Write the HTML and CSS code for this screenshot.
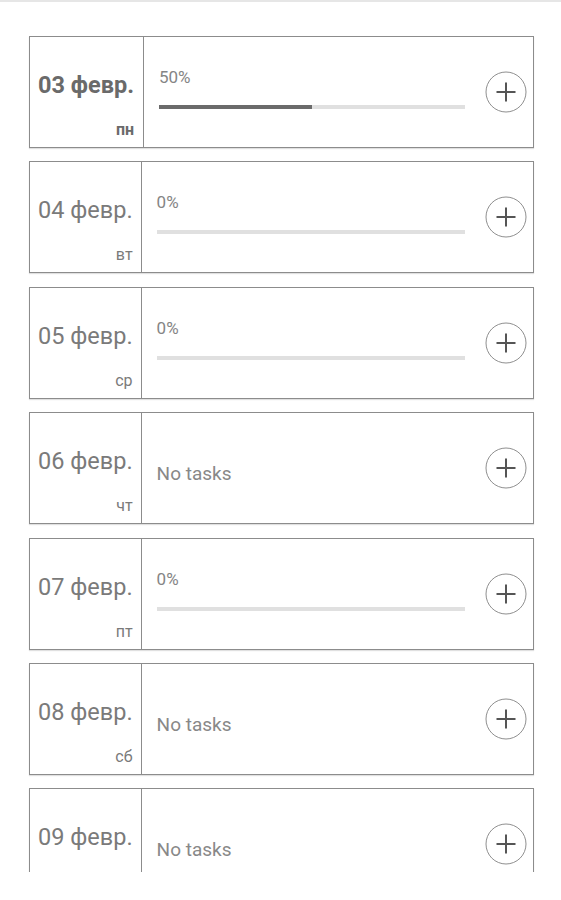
FILE: index.html
```html
<!DOCTYPE html>
<html lang="ru">
<head>
<meta charset="utf-8">
<title>Tasks</title>
<link rel="stylesheet" href="styles.css">
</head>
<body>
<div class="topbar"></div>
<div class="list">
  <div class="card today">
    <div class="date"><div class="num">03 февр.</div><div class="wd">пн</div></div>
    <div class="body">
      <div class="progress"><div class="pct">50%</div><div class="bar"><div class="fill" style="width:50%"></div></div></div>
      <button class="add"><svg viewBox="0 0 42 42" width="42" height="42"><circle cx="21" cy="21" r="20" fill="none" stroke="#8f8f8f" stroke-width="1"/><path d="M11.5 21h19M21 11.5v19" stroke="#555" stroke-width="2" fill="none"/></svg></button>
    </div>
  </div>
  <div class="card">
    <div class="date"><div class="num">04 февр.</div><div class="wd">вт</div></div>
    <div class="body">
      <div class="progress"><div class="pct">0%</div><div class="bar"><div class="fill" style="width:0%"></div></div></div>
      <button class="add"><svg viewBox="0 0 42 42" width="42" height="42"><circle cx="21" cy="21" r="20" fill="none" stroke="#8f8f8f" stroke-width="1"/><path d="M11.5 21h19M21 11.5v19" stroke="#555" stroke-width="2" fill="none"/></svg></button>
    </div>
  </div>
  <div class="card">
    <div class="date"><div class="num">05 февр.</div><div class="wd">ср</div></div>
    <div class="body">
      <div class="progress"><div class="pct">0%</div><div class="bar"><div class="fill" style="width:0%"></div></div></div>
      <button class="add"><svg viewBox="0 0 42 42" width="42" height="42"><circle cx="21" cy="21" r="20" fill="none" stroke="#8f8f8f" stroke-width="1"/><path d="M11.5 21h19M21 11.5v19" stroke="#555" stroke-width="2" fill="none"/></svg></button>
    </div>
  </div>
  <div class="card">
    <div class="date"><div class="num">06 февр.</div><div class="wd">чт</div></div>
    <div class="body">
      <div class="empty">No tasks</div>
      <button class="add"><svg viewBox="0 0 42 42" width="42" height="42"><circle cx="21" cy="21" r="20" fill="none" stroke="#8f8f8f" stroke-width="1"/><path d="M11.5 21h19M21 11.5v19" stroke="#555" stroke-width="2" fill="none"/></svg></button>
    </div>
  </div>
  <div class="card">
    <div class="date"><div class="num">07 февр.</div><div class="wd">пт</div></div>
    <div class="body">
      <div class="progress"><div class="pct">0%</div><div class="bar"><div class="fill" style="width:0%"></div></div></div>
      <button class="add"><svg viewBox="0 0 42 42" width="42" height="42"><circle cx="21" cy="21" r="20" fill="none" stroke="#8f8f8f" stroke-width="1"/><path d="M11.5 21h19M21 11.5v19" stroke="#555" stroke-width="2" fill="none"/></svg></button>
    </div>
  </div>
  <div class="card">
    <div class="date"><div class="num">08 февр.</div><div class="wd">сб</div></div>
    <div class="body">
      <div class="empty">No tasks</div>
      <button class="add"><svg viewBox="0 0 42 42" width="42" height="42"><circle cx="21" cy="21" r="20" fill="none" stroke="#8f8f8f" stroke-width="1"/><path d="M11.5 21h19M21 11.5v19" stroke="#555" stroke-width="2" fill="none"/></svg></button>
    </div>
  </div>
  <div class="card">
    <div class="date"><div class="num">09 февр.</div></div>
    <div class="body">
      <div class="empty">No tasks</div>
      <button class="add"><svg viewBox="0 0 42 42" width="42" height="42"><circle cx="21" cy="21" r="20" fill="none" stroke="#8f8f8f" stroke-width="1"/><path d="M11.5 21h19M21 11.5v19" stroke="#555" stroke-width="2" fill="none"/></svg></button>
    </div>
  </div>
</div>
</body>
</html>
```
FILE: styles.css
```css
html, body {
  margin: 0;
  padding: 0;
  background: #fff;
  font-family: Roboto, "Noto Sans", sans-serif;
  color: #777;
}
.topbar {
  height: 2px;
  background: #e6e6e6;
}
.list {
  height: 870px;
  overflow: hidden;
  padding: 34px 0 0 29px;
  box-sizing: border-box;
  display: flex;
  flex-direction: column;
  gap: 13.4px;
}
.card {
  flex: none;
  width: 505px;
  height: 112px;
  box-sizing: border-box;
  border: 1px solid #8c8c8c;
  box-shadow: 0 1px 1px rgba(0,0,0,0.12);
  display: flex;
}
.date {
  flex: none;
  display: flex;
  flex-direction: column;
  align-items: flex-end;
  padding: 36px 8px 9px 8px;
  border-right: 1px solid #8c8c8c;
}
.num {
  font-size: 23.5px;
  line-height: 24px;
  color: #7a7a7a;
}
.wd {
  margin-top: auto;
  font-size: 16px;
  line-height: 16px;
  color: #7a7a7a;
}
.today .num, .today .wd {
  font-weight: 700;
  color: #6a6a6a;
}
.today .date {
  padding-right: 9px;
}
.body {
  flex: 1;
  display: flex;
  align-items: center;
  padding: 0 6px 0 15px;
}
.progress {
  flex: 1;
  align-self: flex-start;
  padding-top: 32px;
  margin-right: 20px;
}
.pct {
  font-size: 17px;
  line-height: 17px;
  color: #858585;
}
.bar {
  margin-top: 19px;
  height: 4px;
  background: #e0e0e0;
}
.fill {
  height: 100%;
  background: #6b6b6b;
}
.empty {
  flex: 1;
  align-self: flex-start;
  padding-top: 51px;
  font-size: 19px;
  line-height: 19px;
  color: #888;
}
.add {
  flex: none;
  width: 42px;
  height: 42px;
  padding: 0;
  border: 0;
  background: none;
  display: block;
}
.add svg {
  display: block;
}
```
